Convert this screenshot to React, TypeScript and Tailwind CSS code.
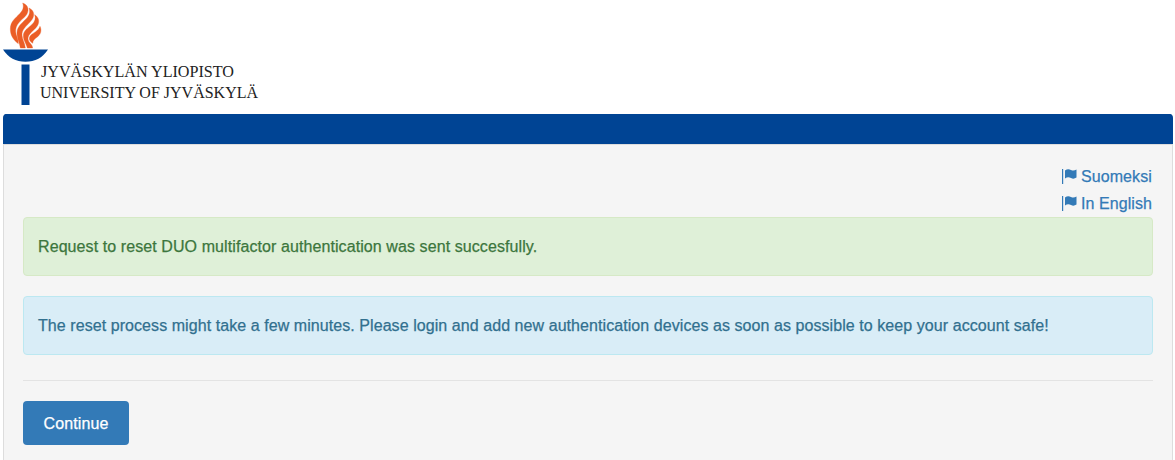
import React from "react";

function Logo() {
  return (
    <svg className="block" width="262" height="106" viewBox="0 0 262 106" role="img" aria-label="University of Jyväskylä">
      <g transform="scale(.33333)" fill="#eb5e27" stroke="#eb5e27" strokeWidth="1">
        <path d="M68 9C87 15 89 35 76 49C62 63 46 74 47 94C48 108 55 115 55 131C40 120 31 106 31 87C31 64 47 54 59 41C70 30 72 20 68 9Z" />
        <path d="M87 24C105 32 105 50 92 64C79 79 65 88 66 106C67 120 75 129 76 144H61C59 128 51 116 51 99C51 80 65 70 78 57C89 46 91 35 87 24Z" />
        <path d="M104 44C119 53 120 70 108 83C97 95 84 103 84 116C84 128 97 131 98 144H82C79 130 70 122 70 107C70 92 84 84 95 74C105 65 108 55 104 44Z" />
        <path d="M120 79C126 92 122 103 113 110C104 117 98 121 98 130C90 124 87 119 88 113C90 105 98 101 107 95C114 90 118 86 120 79Z" />
      </g>
      <path d="M3 49.5H48C43 57.5 35 61.8 25.5 61.8S8 57.5 3 49.5Z" fill="#004494" />
      <path d="M21.5 64.5H29.5V105H21.5Z" fill="#004494" />
      <g fill="#222" fontFamily="'Palatino Linotype', 'Liberation Serif', serif" fontSize="16">
        <text x="41" y="77" textLength="193" lengthAdjust="spacingAndGlyphs">JYVÄSKYLÄN YLIOPISTO</text>
        <text x="40" y="98" textLength="218" lengthAdjust="spacingAndGlyphs">UNIVERSITY OF JYVÄSKYLÄ</text>
      </g>
    </svg>
  );
}

function FlagLink({ label }: { label: string }) {
  return (
    <a href="#" className="flex h-[27px] items-center text-[#337ab7]">
      <svg className="mr-1 block -translate-y-px" width="15" height="16" viewBox="0 0 15 16" fill="currentColor" aria-hidden="true">
        <path d="M0 1H1.2V16H0ZM3 2.5C5 1 7 1 9 2C11 3 12.5 2.7 14.5 1.5V9.5C12.5 10.8 11 11 9 10C7 9 5 9 3 10.5Z" />
      </svg>
      {label}
    </a>
  );
}

export default function App() {
  return (
    <div className="h-[460px] overflow-hidden bg-white pr-[2px] pl-[3px] font-['Liberation_Sans',Arial,sans-serif] text-base text-[#333] [-webkit-text-stroke:0.25px_currentColor]">
      <header className="-ml-[3px] h-[114px] [-webkit-text-stroke:0]">
        <Logo />
      </header>
      <main className="h-[400px] rounded-t border border-[#ddd] border-t-[#004494] bg-[#f5f5f5]">
        <div className="-mx-px -mt-px h-[31px] rounded-t border-b border-[#ddd] bg-[#004494]" />
        <div className="px-[19px] pt-[18px]">
          <nav className="flex flex-col items-end">
            <div className="w-[91px] tracking-[0.08px]">
              <FlagLink label="Suomeksi" />
              <FlagLink label="In English" />
            </div>
          </nav>
          <div role="status" className="mb-5 flex h-[59px] items-center rounded border border-[#d6e9c6] bg-[#dff0d8] px-[14px] text-[#3c763d]">
            <span className="tracking-[0.087px]">Request to reset DUO multifactor authentication was sent succesfully.</span>
          </div>
          <div className="flex h-[59px] items-center rounded border border-[#bce8f1] bg-[#d9edf7] px-[14px] text-[#31708f]">
            <span className="tracking-[0.067px]">The reset process might take a few minutes. Please login and add new authentication devices as soon as possible to keep your account safe!</span>
          </div>
          <hr className="mt-[25px] mb-5 border-[#e3e3e3]" />
          <button className="h-11 w-[106px] rounded bg-[#337ab7] pt-px text-base tracking-[0.1px] text-white">Continue</button>
        </div>
      </main>
    </div>
  );
}
